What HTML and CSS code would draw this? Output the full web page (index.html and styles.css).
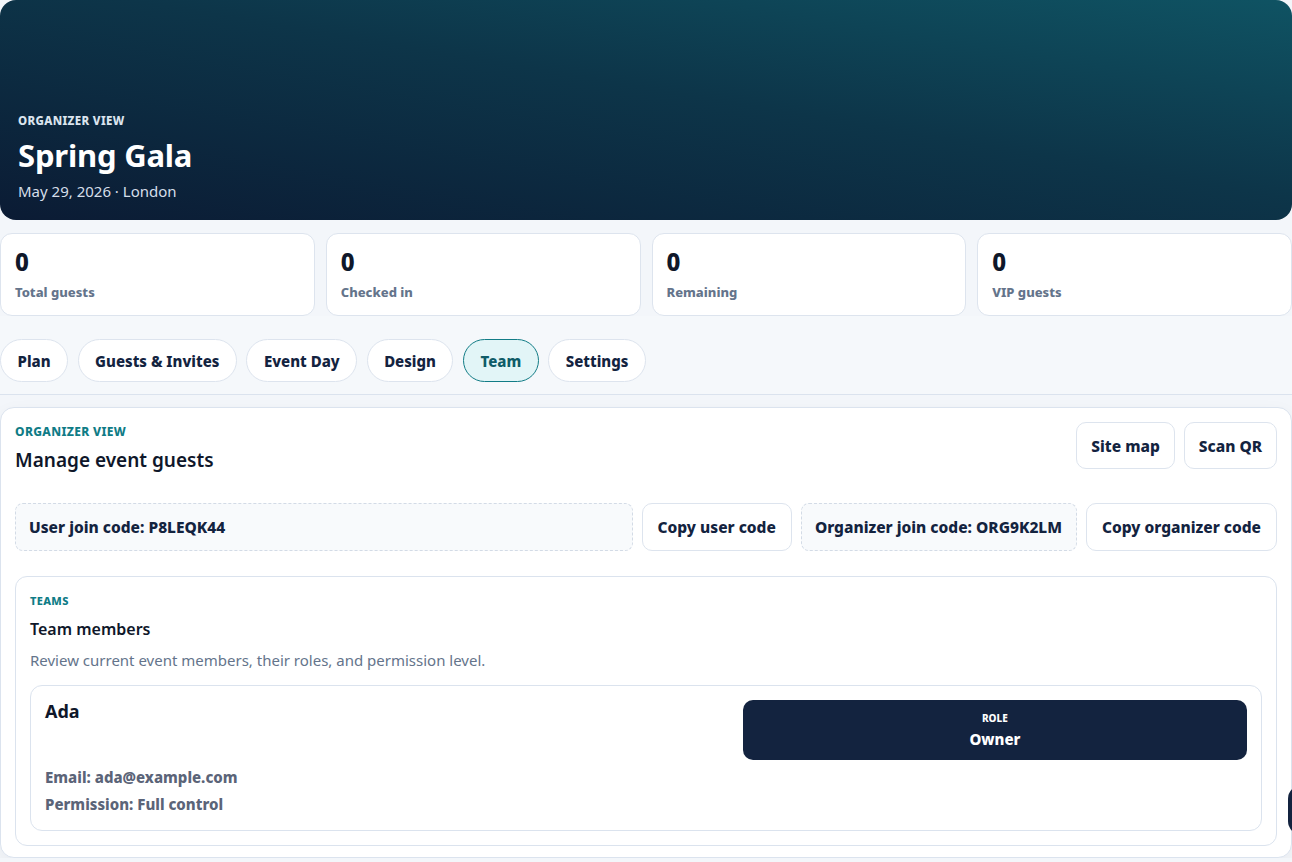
FILE: index.html
```html
<!DOCTYPE html>
<html lang="en">
<head>
    <meta charset="UTF-8">
    <meta name="viewport" content="width=device-width, initial-scale=1.0">
    <title>Spring Gala - Organizer</title>
    <link rel="stylesheet" href="styles.css">
</head>
<body>
    <header class="hero">
        <p class="hero-eyebrow">Organizer view</p>
        <h1>Spring Gala</h1>
        <p class="hero-meta">May 29, 2026 · London</p>
    </header>

    <section class="stats">
        <div class="stat-card">
            <div class="stat-value">0</div>
            <div class="stat-label">Total guests</div>
        </div>
        <div class="stat-card">
            <div class="stat-value">0</div>
            <div class="stat-label">Checked in</div>
        </div>
        <div class="stat-card">
            <div class="stat-value">0</div>
            <div class="stat-label">Remaining</div>
        </div>
        <div class="stat-card">
            <div class="stat-value">0</div>
            <div class="stat-label">VIP guests</div>
        </div>
    </section>

    <nav class="tabs">
        <button class="tab">Plan</button>
        <button class="tab">Guests &amp; Invites</button>
        <button class="tab">Event Day</button>
        <button class="tab">Design</button>
        <button class="tab active">Team</button>
        <button class="tab">Settings</button>
    </nav>

    <main class="panel">
        <div class="panel-head">
            <div>
                <p class="eyebrow">Organizer view</p>
                <h2>Manage event guests</h2>
            </div>
            <div class="head-actions">
                <button class="btn">Site map</button>
                <button class="btn">Scan QR</button>
            </div>
        </div>

        <div class="codes">
            <div class="code-box grow">User join code: P8LEQK44</div>
            <button class="btn">Copy user code</button>
            <div class="code-box">Organizer join code: ORG9K2LM</div>
            <button class="btn">Copy organizer code</button>
        </div>

        <section class="teams">
            <p class="eyebrow small">Teams</p>
            <h3>Team members</h3>
            <p class="teams-desc">Review current event members, their roles, and permission level.</p>

            <div class="member-card">
                <div class="member-top">
                    <div class="member-name">Ada</div>
                    <div class="role-box">
                        <span class="role-label">Role</span>
                        <span class="role-value">Owner</span>
                    </div>
                </div>
                <p class="member-line">Email: ada@example.com</p>
                <p class="member-line">Permission: Full control</p>
            </div>
        </section>
    </main>

    <button class="fab" aria-label="Help"></button>
</body>
</html>
```

FILE: styles.css
```css
* {
    margin: 0;
    padding: 0;
    box-sizing: border-box;
}

body {
    font-family: "Noto Sans", "Open Sans", sans-serif;
    background-color: #f3f6fa;
    color: #0f172a;
    width: 1292px;
}

button {
    font-family: inherit;
    cursor: pointer;
}

/* Hero */
.hero {
    height: 220px;
    border-radius: 16px;
    padding: 0 18px 19px;
    display: flex;
    flex-direction: column;
    justify-content: flex-end;
    color: white;
    background: linear-gradient(to bottom left, #0f5363 0%, #0d3549 45%, #0b1b34 100%);
}

.hero-eyebrow {
    font-size: 11.5px;
    font-weight: 800;
    letter-spacing: 0.03em;
    text-transform: uppercase;
    color: #dbe4ee;
    margin-bottom: 9px;
}

.hero h1 {
    font-size: 31px;
    font-weight: 700;
    line-height: 1.2;
    letter-spacing: -0.2px;
}

.hero-meta {
    font-size: 15px;
    color: #d5dee9;
    margin-top: 7px;
}

/* Stats */
.stats {
    display: grid;
    grid-template-columns: repeat(4, 1fr);
    gap: 11px;
    margin-top: 13px;
}

.stat-card {
    background: white;
    border: 1px solid #dde4ee;
    border-radius: 12px;
    height: 83px;
    padding: 12px 14px;
}

.stat-value {
    font-size: 24px;
    font-weight: 800;
    line-height: 32px;
    color: #0f172a;
}

.stat-label {
    font-size: 13px;
    font-weight: 800;
    color: #64748b;
    margin-top: 5px;
}

/* Tabs */
.tabs {
    display: flex;
    gap: 9.5px;
    padding: 23px 0 12px;
    border-bottom: 1px solid #dbe3ee;
    background: #f5f8fb;
}

.tab {
    height: 43px;
    padding: 0 16.5px;
    border: 1px solid #dde4ee;
    border-radius: 999px;
    background: white;
    font-size: 15px;
    font-weight: 800;
    color: #13233f;
}

.tab.active {
    background: #e2f5f7;
    border-color: #127c86;
    color: #0f5c68;
}

/* Panel */
.panel {
    margin-top: 12px;
    background: white;
    border: 1px solid #dbe3ee;
    border-radius: 14px;
    padding: 15px 14px 11px;
    box-shadow: 0 6px 18px rgba(15, 23, 42, 0.05);
}

.panel-head {
    display: flex;
    justify-content: space-between;
    align-items: flex-start;
}

.eyebrow {
    font-size: 12px;
    font-weight: 800;
    letter-spacing: 0.03em;
    text-transform: uppercase;
    color: #0f7c86;
}

.eyebrow.small {
    font-size: 11px;
}

.panel-head h2 {
    font-size: 19px;
    font-weight: 600;
    color: #0f172a;
    margin-top: 7px;
}

.head-actions {
    display: flex;
    gap: 9px;
    margin-top: -1px;
}

.btn {
    height: 48px;
    padding: 0 15px;
    background: white;
    border: 1px solid #dde4ee;
    border-radius: 10px;
    font-size: 15.5px;
    font-weight: 800;
    color: #13233f;
    white-space: nowrap;
}

.head-actions .btn {
    height: 47px;
    padding: 0 14px;
}

.codes {
    display: flex;
    gap: 9px;
    margin-top: 30px;
}

.code-box {
    height: 48px;
    display: flex;
    align-items: center;
    padding: 0 14px 0 13px;
    background: #f8fafc;
    border: 1px dashed #d3dbe6;
    border-radius: 8px;
    font-size: 15.5px;
    font-weight: 800;
    color: #13233f;
    white-space: nowrap;
}

.code-box.grow {
    flex: 1;
}

/* Teams */
.teams {
    margin-top: 25px;
    border: 1px solid #dbe3ee;
    border-radius: 12px;
    padding: 16px 14px 14px;
}

.teams h3 {
    font-size: 16px;
    font-weight: 600;
    color: #0f172a;
    margin-top: 10px;
}

.teams-desc {
    font-size: 15px;
    color: #64748b;
    margin-top: 10px;
}

.member-card {
    margin-top: 15px;
    border: 1px solid #dbe3ee;
    border-radius: 12px;
    padding: 14px 14px 16px;
}

.member-top {
    display: grid;
    grid-template-columns: 1.36fr 1fr;
    gap: 12px;
    align-items: start;
}

.member-name {
    font-size: 18px;
    font-weight: 700;
    color: #0f172a;
    margin-top: -1px;
}

.role-box {
    background: #13233f;
    border-radius: 10px;
    height: 60px;
    display: flex;
    flex-direction: column;
    align-items: center;
    justify-content: center;
    color: white;
}

.role-label {
    font-size: 10px;
    font-weight: 800;
    text-transform: uppercase;
}

.role-value {
    font-size: 15px;
    font-weight: 800;
    margin-top: 4px;
}

.member-line {
    font-size: 15px;
    font-weight: 800;
    color: #5b6478;
    margin-top: 7px;
}

.member-top + .member-line {
    margin-top: 7px;
}

/* Floating button, mostly off screen */
.fab {
    position: fixed;
    right: -46px;
    top: 785px;
    width: 50px;
    height: 50px;
    border: none;
    border-radius: 14px;
    background: #13233f;
}
```
